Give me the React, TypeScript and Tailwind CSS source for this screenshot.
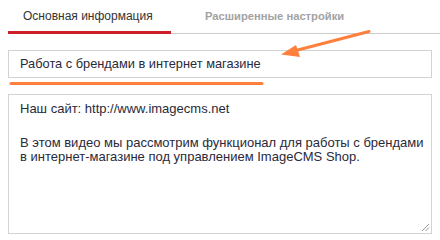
import React from "react";

export default function App() {
  return (
    <div
      className="relative w-[440px] h-[240px] bg-white overflow-hidden"
      style={{ fontFamily: '"Liberation Sans", Arial, sans-serif' }}
    >
      {/* Tabs */}
      <div className="flex h-[34px] pl-2">
        <div className="w-[163px] border-b-[3px] border-[#cd1f27] flex items-center pl-[15px] text-[12px] text-[#333]">
          Основная информация
        </div>
        <div className="flex-1 border-b border-[#cccccc] flex items-center pl-[34px] text-[11.2px] font-bold text-[#a3a3a3]">
          Расширенные настройки
        </div>
      </div>

      <div className="px-2">
        {/* Title input */}
        <div className="mt-4 h-[28px] border border-[#d3d3d3] flex items-center pl-[11px] text-[12.8px] text-[#2a2a3a]">
          Работа с брендами в интернет магазине
        </div>

        {/* Description textarea */}
        <div className="relative mt-4 h-[140px] border border-[#d3d3d3] pl-[11px] pt-[7px] text-[13px] leading-[14px] text-[#2a2a3a]">
          <p>Наш сайт: http://www.imagecms.net</p>
          <p className="mt-[20px]">
            В этом видео мы рассмотрим функционал для работы с брендами
            <br />
            в интернет-магазине под управлением ImageCMS Shop.
          </p>
          <svg
            className="absolute right-[1px] bottom-[1px]"
            width="9"
            height="9"
            viewBox="0 0 9 9"
          >
            <line x1="8" y1="1" x2="1" y2="8" stroke="#9a9a9a" strokeWidth="1" />
            <line x1="8" y1="4.5" x2="4.5" y2="8" stroke="#9a9a9a" strokeWidth="1" />
          </svg>
        </div>
      </div>

      {/* Annotation overlay: orange underline and arrow */}
      <svg
        className="absolute left-0 top-0 pointer-events-none"
        width="440"
        height="240"
        viewBox="0 0 440 240"
      >
        <line x1="11" y1="83.5" x2="262" y2="83.5" stroke="#ff7f3c" strokeWidth="3" strokeLinecap="round" />
        <line x1="369" y1="31.5" x2="292" y2="51.5" stroke="#ff7f3c" strokeWidth="3" strokeLinecap="round" />
        <polygon points="281,54.5 296,45 300,57" fill="#ff7f3c" />
      </svg>
    </div>
  );
}
